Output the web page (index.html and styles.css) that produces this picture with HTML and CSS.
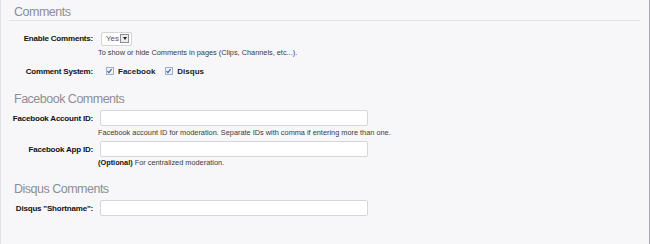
FILE: index.html
```html
<!DOCTYPE html>
<html lang="en">
<head>
    <meta charset="UTF-8">
    <title>Comments Settings</title>
    <link rel="stylesheet" href="styles.css">
</head>
<body>
    <div class="panel">
        <!-- General -->
        <h2 class="section-title underlined">Comments</h2>
        <div class="form-row select-row">
            <label class="row-label">Enable Comments:</label>
            <div class="field">
                <div class="select-box">
                    <span class="select-value">Yes</span>
                    <span class="select-btn"><span class="arrow"></span></span>
                </div>
            </div>
        </div>
        <p class="hint hint-first">To show or hide Comments in pages (Clips, Channels, etc...).</p>
        <div class="form-row check-row">
            <label class="row-label">Comment System:</label>
            <div class="field checks">
                <label class="check"><span class="check-box"><svg viewBox="0 0 8 8"><path d="M1.6 4 L3.3 5.8 L6.4 1.8" fill="none" stroke="#3158b8" stroke-width="1.2"/></svg></span>Facebook</label>
                <label class="check"><span class="check-box"><svg viewBox="0 0 8 8"><path d="M1.6 4 L3.3 5.8 L6.4 1.8" fill="none" stroke="#3158b8" stroke-width="1.2"/></svg></span>Disqus</label>
            </div>
        </div>

        <!-- Facebook -->
        <h2 class="section-title fb-title">Facebook Comments</h2>
        <div class="form-row input-row first-input">
            <label class="row-label" for="fbAccount">Facebook Account ID:</label>
            <div class="field"><input type="text" id="fbAccount"></div>
        </div>
        <p class="hint">Facebook account ID for moderation. Separate IDs with comma if entering more than one.</p>
        <div class="form-row input-row">
            <label class="row-label" for="fbApp">Facebook App ID:</label>
            <div class="field"><input type="text" id="fbApp"></div>
        </div>
        <p class="hint hint-tight"><b>(Optional)</b> For centralized moderation.</p>

        <!-- Disqus -->
        <h2 class="section-title disqus-title">Disqus Comments</h2>
        <div class="form-row input-row">
            <label class="row-label" for="disqusName">Disqus "Shortname":</label>
            <div class="field"><input type="text" id="disqusName"></div>
        </div>
    </div>
</body>
</html>
```

FILE: styles.css
```css
html, body {
    margin: 0;
    height: 100%;
}

body {
    font-family: "Liberation Sans", Arial, sans-serif;
    background-color: #f7f7f9;
}

.panel {
    box-sizing: border-box;
    height: 244px;
    padding: 5px 9px 0 8px;
    border-left: 1px solid #e2e2e6;
    border-right: 1px solid #a9a9ad;
}

.section-title {
    margin: 0;
    padding-left: 5px;
    font-size: 12.5px;
    font-weight: normal;
    line-height: 16px;
    letter-spacing: -0.5px;
    color: #8e8e92;
}

.section-title.underlined {
    line-height: 15px;
    border-bottom: 1px solid #e3e3e7;
}

.fb-title {
    margin-top: 12px;
}

.disqus-title {
    margin-top: 13px;
}

.form-row {
    display: flex;
    align-items: center;
    gap: 7px;
}

.row-label {
    width: 84px;
    text-align: right;
    font-size: 8px;
    font-weight: bold;
    letter-spacing: -0.2px;
    color: #111111;
    white-space: nowrap;
}

.field {
    display: flex;
    align-items: center;
}

.hint {
    margin: 2px 0 0 89px;
    font-size: 7.35px;
    line-height: 10px;
    color: #3a3a3a;
}

.hint-first,
.hint-tight {
    margin-top: 1px;
}

.hint b {
    color: #111111;
}

/* select */
.select-row {
    margin-top: 9px;
    height: 17px;
}

.select-box {
    display: flex;
    align-items: center;
    box-sizing: border-box;
    width: 31px;
    height: 14px;
    margin-left: 1px;
    padding: 0 2px 0 4px;
    background-color: #ffffff;
    border: 1px solid #d4d4d8;
    border-radius: 2px;
}

.select-value {
    flex: 1;
    font-size: 8px;
    color: #555555;
}

.select-btn {
    display: flex;
    align-items: center;
    justify-content: center;
    box-sizing: border-box;
    width: 9px;
    height: 9px;
    border: 1px solid #8e8e92;
    background-color: #ececee;
}

.arrow {
    width: 0;
    height: 0;
    border-left: 2.5px solid transparent;
    border-right: 2.5px solid transparent;
    border-top: 3px solid #222222;
}

/* checkboxes */
.check-row {
    margin-top: 5px;
    height: 16px;
}

.checks {
    gap: 10px;
    padding-left: 6px;
}

.check {
    display: flex;
    align-items: center;
    gap: 4px;
    font-size: 8px;
    font-weight: bold;
    color: #222222;
}

.check-box {
    display: flex;
    box-sizing: border-box;
    width: 8px;
    height: 8px;
    border: 1px solid #9fb0c8;
    background-color: #eef1f7;
}

.check-box svg {
    display: block;
    width: 8px;
    height: 8px;
    margin: -1px 0 0 -1px;
}

/* text inputs */
.input-row {
    margin-top: 3px;
    height: 16px;
}

.first-input {
    margin-top: 3px;
}

input {
    box-sizing: border-box;
    width: 268px;
    height: 16px;
    margin: 0;
    padding: 1px 4px;
    border: 1px solid #d6d6da;
    border-radius: 2px;
    background-color: #ffffff;
    font-size: 8px;
}

input:focus {
    outline: none;
    border-color: #9aa8c0;
}
```
